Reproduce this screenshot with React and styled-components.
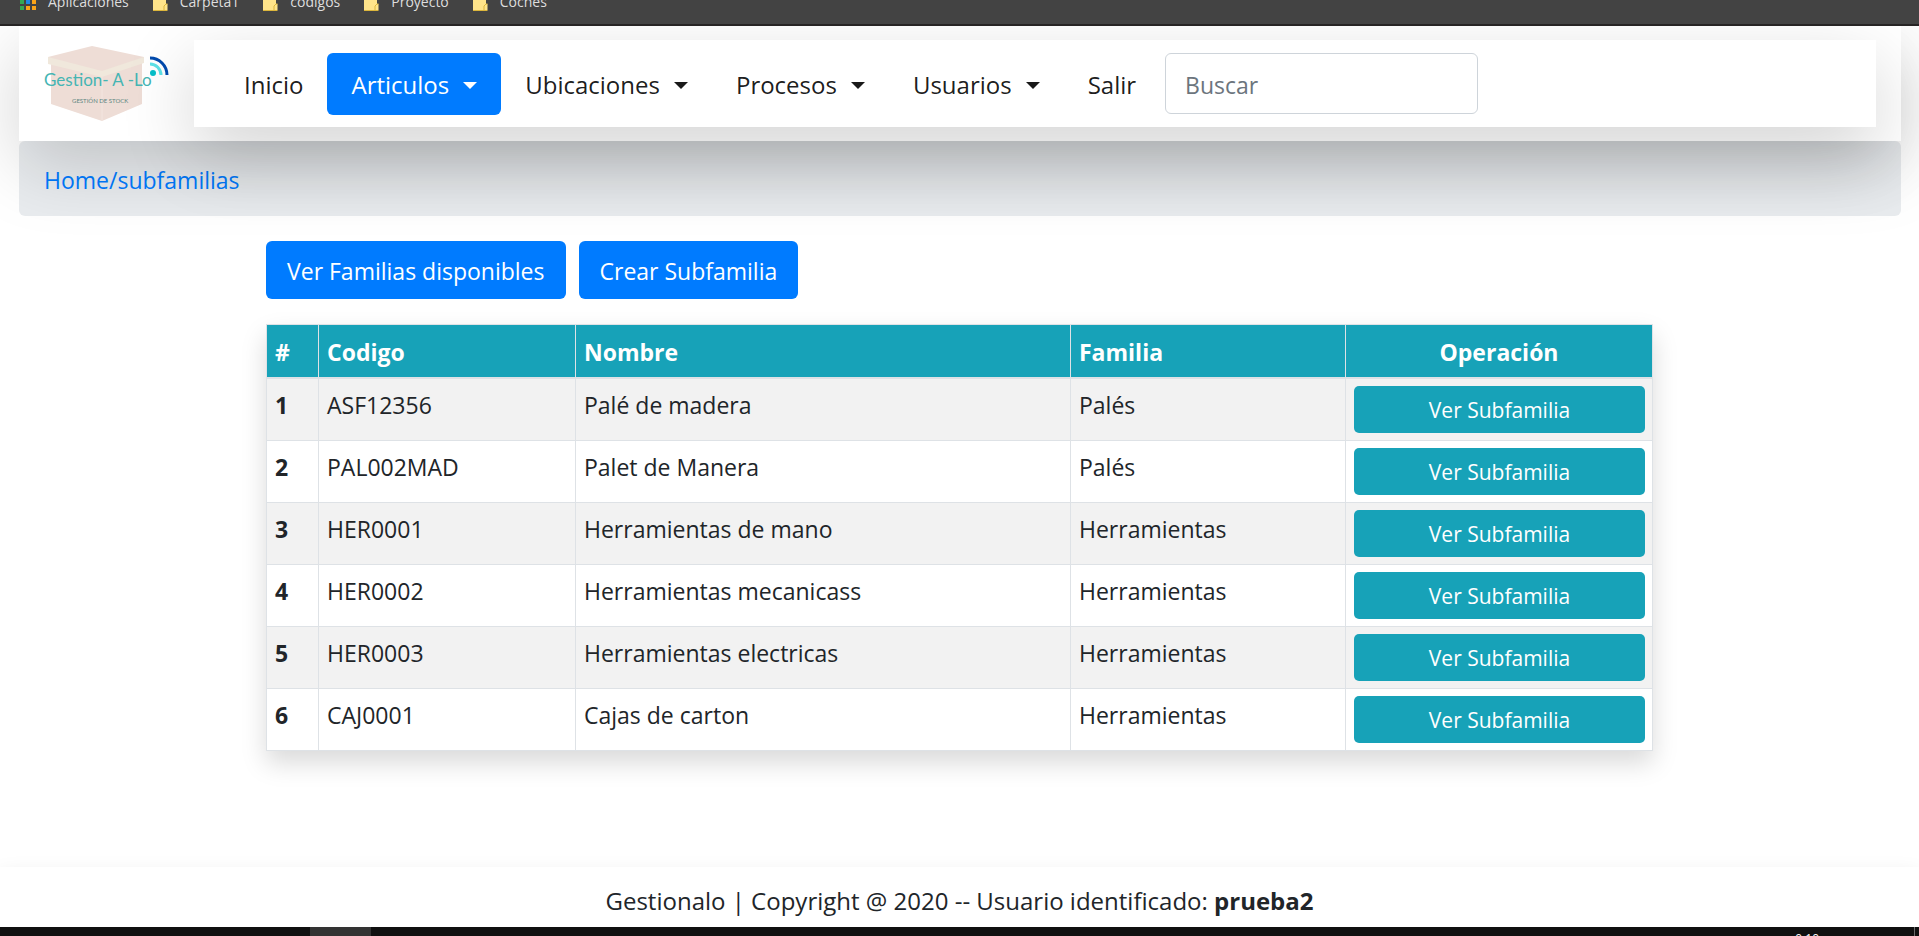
import React from "react";
import styled, { createGlobalStyle } from "styled-components";

const colors = {
  primary: "#007bff",
  info: "#17a2b8",
  text: "#212529",
  border: "#dee2e6",
};
const largeShadow = "0 24px 72px rgba(0, 0, 0, 0.175)";
const mediumShadow = "0 12px 24px rgba(0, 0, 0, 0.15)";

const GlobalStyle = createGlobalStyle`
  *, *::before, *::after { box-sizing: border-box; }
  html, body, #root { height: 100%; }
  body {
    margin: 0;
    background: #fff;
    color: ${colors.text};
    font-family: "Open Sans", "Noto Sans", sans-serif;
    font-size: 23px;
    line-height: 36px;
  }
  button, input { font: inherit; }
  a { color: inherit; text-decoration: none; }
`;

const Screen = styled.div`
  display: flex;
  flex-direction: column;
  height: 100vh;
  overflow: hidden;
`;

const BookmarksBar = styled.nav`
  flex: none;
  display: flex;
  align-items: flex-end;
  gap: 23px;
  height: 26px;
  padding: 0 19px 12px;
  overflow: hidden;
  background: #434343;
  border-bottom: 2px solid #262424;
  color: #dedede;
  font-size: 14px;
  line-height: 20px;
  position: relative;
  z-index: 3;
`;

const Bookmark = styled.a`
  display: flex;
  align-items: center;
  gap: 12px;
`;

const Page = styled.div`
  flex: 1;
  min-height: 0;
  display: flex;
  flex-direction: column;
`;

const Header = styled.header`
  position: relative;
  z-index: 2;
  display: flex;
  align-items: center;
  gap: 24px;
  margin: 0 18px 0 19px;
  padding: 14px 25px;
  background: #fff;
  box-shadow: ${largeShadow};
`;

const Brand = styled.a`
  flex: none;
  display: flex;
`;

const MainNav = styled.nav`
  flex: 1;
  display: flex;
  align-items: flex-start;
  gap: 5px;
  padding: 13px 26px 12px;
  background: #fff;
  box-shadow: ${largeShadow};
`;

const NavList = styled.ul`
  display: flex;
  margin: 0;
  padding: 0;
  list-style: none;
  font-size: 24px;
`;

const NavLink = styled.a`
  display: flex;
  align-items: center;
  gap: 14px;
  padding: 14px 24px 12px;
  border-radius: 6px;
  white-space: nowrap;
  background: ${(p) => (p.$active ? colors.primary : "transparent")};
  color: ${(p) => (p.$active ? "#fff" : "rgba(0, 0, 0, 0.9)")};
`;

const Caret = styled.span`
  border-top: 7px solid currentColor;
  border-left: 7px solid transparent;
  border-right: 7px solid transparent;
`;

const SearchInput = styled.input`
  width: 313px;
  height: 61px;
  padding: 9px 19px 7px;
  border: 1px solid #ced4da;
  border-radius: 6px;
  background: #fff;
  color: #495057;
  &::placeholder { color: #6c757d; opacity: 1; }
`;

const Breadcrumb = styled.nav`
  margin: 0 18px 0 19px;
  padding: 21px 25px 18px;
  border-radius: 6px;
  background: #e9ecef;
  color: ${colors.primary};
`;

const Content = styled.main`
  width: 100%;
  max-width: 1387px;
  margin: 25px auto 0;
`;

const Actions = styled.div`
  display: flex;
  gap: 13px;
  margin-bottom: 25px;
`;

const Button = styled.button`
  display: block;
  width: ${(p) => (p.$block ? "100%" : "auto")};
  padding: ${(p) => (p.$small ? "7px 12px 5px" : "11px 20px 9px")};
  border: 1px solid transparent;
  border-radius: ${(p) => (p.$small ? "5px" : "6px")};
  background: ${(p) => (p.$small ? colors.info : colors.primary)};
  color: #fff;
  font-size: ${(p) => (p.$small ? "21px" : "23px")};
  line-height: ${(p) => (p.$small ? "33px" : "36px")};
  cursor: pointer;
`;

const Table = styled.table`
  width: 100%;
  table-layout: fixed;
  border-collapse: collapse;
  box-shadow: ${mediumShadow};
`;

const Col = styled.col`
  width: ${(p) => p.$width};
`;

const HeadCell = styled.th`
  padding: 9px 8px 7px;
  border: 1px solid ${colors.border};
  border-bottom-width: 2px;
  background: ${colors.info};
  color: #fff;
  font-weight: 700;
  text-align: ${(p) => (p.$center ? "center" : "left")};
`;

const Row = styled.tr`
  background: #fff;
  &:nth-child(odd) { background: #f2f2f2; }
`;

const cellStyle = `
  padding: 8px 8px 6px;
  border: 1px solid ${colors.border};
  text-align: left;
  vertical-align: top;
`;
const RowHead = styled.th`
  ${cellStyle}
  font-weight: 700;
`;
const Cell = styled.td`
  ${cellStyle}
`;
const ActionCell = styled.td`
  padding: 7px 7px 7px 8px;
  border: 1px solid ${colors.border};
`;

const Footer = styled.footer`
  margin-top: auto;
  padding: 16px 24px 8px;
  background: #fff;
  box-shadow: ${mediumShadow};
  font-size: 24px;
  text-align: center;
`;

const Taskbar = styled.div`
  flex: none;
  position: relative;
  z-index: 3;
  display: flex;
  justify-content: space-between;
  height: 9px;
  padding: 0 4px 0 310px;
  overflow: hidden;
  background: #101010;
`;

const TaskbarApp = styled.span`
  width: 61px;
  background: #333;
`;

const Tray = styled.div`
  border-right: 1px solid #6b6b6b;
  padding-right: 95px;
  color: #fff;
  font-size: 12px;
  line-height: 24px;
`;

function AppsIcon() {
  const fills = ["#ea4335", "#ea4335", "#fbbc05", "#34a853", "#1e88e5", "#fba418", "#34a853", "#fba418", "#fba418"];
  return (
    <svg width="17" height="17" viewBox="0 0 17 17" aria-hidden="true">
      {fills.map((fill, i) => (
        <rect key={i} x={(i % 3) * 6 + 1} y={Math.floor(i / 3) * 6} width="4" height="4" fill={fill} />
      ))}
    </svg>
  );
}

function FolderIcon() {
  return (
    <svg width="16" height="18" viewBox="0 0 16 18" aria-hidden="true">
      <path d="M1 0h13v11h1.500v6H1z" fill="#ffe48a" />
      <path d="M1 17.500h14.500M12 17v-4l2-2h1.500" fill="none" stroke="#dcb63c" />
    </svg>
  );
}

function Logo() {
  return (
    <svg width="126" height="82" viewBox="0 0 126 82" role="img" aria-label="Gestion-A-Lo">
      <path d="M7 18h91v43L58 78 7 61z" fill="#eeddd6" />
      <path d="M4 14 48 3l52 11v5L58 33 4 20z" fill="#eeddd6" />
      <path d="M4 14l54 14 42-14v6L58 34 4 21z" fill="#f0e8dc" />
      <path d="M58 34v44" stroke="#f3e5df" />
      <circle cx="109" cy="30" r="3" fill="#06bfc9" />
      <path d="M106 21a11 11 0 0 1 11 11" fill="none" stroke="#5ce1e6" strokeWidth="3" />
      <path d="M106 15a17 17 0 0 1 17 17" fill="none" stroke="#004aad" strokeWidth="3" />
      <text x="0" y="43" fontFamily="Lato, sans-serif" fontSize="17" fill="#45b5b3">
        Gestion- A -Lo
      </text>
      <text x="28" y="60" fontFamily="Lato, sans-serif" fontSize="6" fill="#5d8580">
        GESTIÓN DE STOCK
      </text>
    </svg>
  );
}

const bookmarks = ["Carpeta1", "codigos", "Proyecto", "Coches"];

const navItems = [
  { label: "Inicio" },
  { label: "Articulos", menu: true, active: true },
  { label: "Ubicaciones", menu: true },
  { label: "Procesos", menu: true },
  { label: "Usuarios", menu: true },
  { label: "Salir" },
];

const subfamilies = [
  { code: "ASF12356", name: "Palé de madera", family: "Palés" },
  { code: "PAL002MAD", name: "Palet de Manera", family: "Palés" },
  { code: "HER0001", name: "Herramientas de mano", family: "Herramientas" },
  { code: "HER0002", name: "Herramientas mecanicass", family: "Herramientas" },
  { code: "HER0003", name: "Herramientas electricas", family: "Herramientas" },
  { code: "CAJ0001", name: "Cajas de carton", family: "Herramientas" },
];

export default function App() {
  return (
    <Screen>
      <GlobalStyle />
      <BookmarksBar>
        <Bookmark href="#"><AppsIcon />Aplicaciones</Bookmark>
        {bookmarks.map((name) => (
          <Bookmark href="#" key={name}><FolderIcon />{name}</Bookmark>
        ))}
      </BookmarksBar>
      <Page>
        <Header>
          <Brand href="#"><Logo /></Brand>
          <MainNav>
            <NavList>
              {navItems.map((item) => (
                <li key={item.label}>
                  <NavLink href="#" $active={item.active}>
                    {item.label}
                    {item.menu && <Caret />}
                  </NavLink>
                </li>
              ))}
            </NavList>
            <SearchInput type="search" placeholder="Buscar" aria-label="Buscar" />
          </MainNav>
        </Header>
        <Breadcrumb><a href="#">Home/subfamilias</a></Breadcrumb>
        <Content>
          <Actions>
            <Button type="button">Ver Familias disponibles</Button>
            <Button type="button">Crear Subfamilia</Button>
          </Actions>
          <Table>
            <colgroup>
              <Col $width="52px" />
              <Col $width="257px" />
              <Col />
              <Col $width="275px" />
              <Col $width="307px" />
            </colgroup>
            <thead>
              <tr>
                <HeadCell scope="col">#</HeadCell>
                <HeadCell scope="col">Codigo</HeadCell>
                <HeadCell scope="col">Nombre</HeadCell>
                <HeadCell scope="col">Familia</HeadCell>
                <HeadCell scope="col" $center>Operación</HeadCell>
              </tr>
            </thead>
            <tbody>
              {subfamilies.map((item, i) => (
                <Row key={item.code}>
                  <RowHead scope="row">{i + 1}</RowHead>
                  <Cell>{item.code}</Cell>
                  <Cell>{item.name}</Cell>
                  <Cell>{item.family}</Cell>
                  <ActionCell><Button type="button" $small $block>Ver Subfamilia</Button></ActionCell>
                </Row>
              ))}
            </tbody>
          </Table>
        </Content>
        <Footer>
          Gestionalo | Copyright @ 2020 -- Usuario identificado: <strong>prueba2</strong>
        </Footer>
      </Page>
      <Taskbar>
        <TaskbarApp />
        <Tray>0:10</Tray>
      </Taskbar>
    </Screen>
  );
}
